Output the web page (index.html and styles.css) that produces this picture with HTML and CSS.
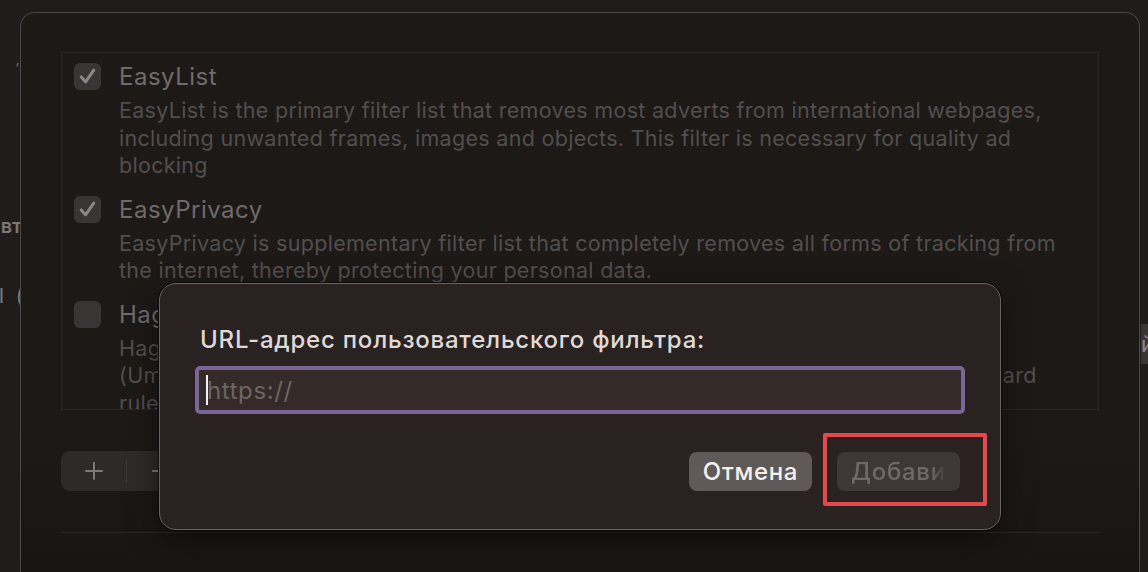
FILE: index.html
```html
<!DOCTYPE html>
<html lang="ru">
<head>
<meta charset="utf-8">
<title>Фильтры</title>
<link rel="stylesheet" href="styles.css">
</head>
<body>
<div class="page">
  <div class="behind-left">
    <span class="frag frag-tick">ʼ</span>
    <span class="frag frag-a">вт</span>
    <span class="frag frag-b">I (</span>
  </div>

  <div class="sheet">
    <div class="filter-list">
      <div class="item">
        <span class="checkbox checked">
          <svg viewBox="0 0 28 28" width="27" height="27"><path d="M7.5 14.5 L12 19.5 L20.5 7.5" fill="none" stroke="#8a8685" stroke-width="3.2" stroke-linecap="round" stroke-linejoin="round"/></svg>
        </span>
        <div class="item-text">
          <div class="item-title">EasyList</div>
          <div class="item-desc">EasyList is the primary filter list that removes most adverts from international webpages, including unwanted frames, images and objects. This filter is necessary for quality ad blocking</div>
        </div>
      </div>
      <div class="item">
        <span class="checkbox checked">
          <svg viewBox="0 0 28 28" width="27" height="27"><path d="M7.5 14.5 L12 19.5 L20.5 7.5" fill="none" stroke="#8a8685" stroke-width="3.2" stroke-linecap="round" stroke-linejoin="round"/></svg>
        </span>
        <div class="item-text">
          <div class="item-title">EasyPrivacy</div>
          <div class="item-desc">EasyPrivacy is supplementary filter list that completely removes all forms of tracking from the internet, thereby protecting your personal data.</div>
        </div>
      </div>
      <div class="item">
        <span class="checkbox"></span>
        <div class="item-text">
          <div class="item-title">Hagezi Multi NORMAL</div>
          <div class="item-desc">Hagezi's Multi NORMAL is an all-round protection list that cleans the internet<br>(Umbrella) blocks ads, affiliates, tracking, metrics, telemetry and phishing with standard<br>rules for everyday browsing.</div>
        </div>
      </div>
    </div>

    <div class="toolbar">
      <div class="segmented">
        <span class="seg">
          <svg viewBox="0 0 20 20" width="20" height="20"><path d="M10 2 V18 M2 10 H18" stroke="#7d7978" stroke-width="2" stroke-linecap="round"/></svg>
        </span>
        <span class="seg-sep"></span>
        <span class="seg">
          <svg viewBox="0 0 20 20" width="20" height="20"><path d="M3 10 H17" stroke="#7d7978" stroke-width="2" stroke-linecap="round"/></svg>
        </span>
      </div>
    </div>
    <div class="divider"></div>
  </div>

  <div class="behind-right">
    <span class="side-btn">й</span>
  </div>

  <div class="dialog">
    <div class="dialog-title">URL-адрес пользовательского фильтра:</div>
    <div class="field">
      <span class="caret"></span>
      <span class="placeholder">https://</span>
    </div>
    <div class="actions">
      <button class="btn btn-cancel">Отмена</button>
      <button class="btn btn-add"><span class="btn-add-label">Добавить</span></button>
      <span class="highlight"></span>
    </div>
  </div>
</div>
</body>
</html>
```

FILE: styles.css
```css
* { box-sizing: border-box; }

html, body {
  margin: 0;
  padding: 0;
  background: #211d1c;
  font-family: "Inter", "Noto Sans", "DejaVu Sans", sans-serif;
}

.page {
  position: relative;
  width: 1148px;
  height: 572px;
  overflow: hidden;
  display: flex;
  align-items: flex-start;
  background: #201c1b;
}

.behind-left {
  width: 20px;
  flex: none;
  display: flex;
  flex-direction: column;
  align-items: flex-end;
  overflow: hidden;
  color: #7c7877;
  font-size: 20px;
  font-weight: 600;
}

.frag { white-space: nowrap; line-height: 20px; }
.frag-tick { margin-top: 58px; font-size: 12px; color: #6a6665; margin-right: 1px; }
.frag-a { margin-top: 138px; margin-right: -2px; }
.frag-b { margin-top: 50px; font-weight: 400; letter-spacing: 3px; margin-right: -6px; }

.sheet {
  width: 1120px;
  height: 600px;
  flex: none;
  margin-top: 12px;
  border: 1px solid #4d4847;
  border-bottom: none;
  border-radius: 15px 15px 0 0;
  background: linear-gradient(180deg, #1d1917 0%, #1d1917 70%, #181413 100%);
  padding: 39px 40px 0 40px;
}

.filter-list {
  height: 358px;
  border: 1px solid #2a2624;
  overflow: hidden;
  padding: 9px 30px 0 12px;
  display: flex;
  flex-direction: column;
  gap: 15px;
}

.item {
  display: flex;
  align-items: flex-start;
  gap: 18px;
}

.checkbox {
  width: 27px;
  height: 27px;
  flex: none;
  border-radius: 6px;
  background: #393535;
  margin-top: 1px;
  display: flex;
}

.item-text { flex: 1; min-width: 0; }

.item-title {
  font-size: 24px;
  line-height: 30px;
  letter-spacing: 0.5px;
  color: #6f6b6a;
  white-space: nowrap;
}

.item-desc {
  margin-top: 5px;
  font-size: 21.5px;
  line-height: 27.5px;
  letter-spacing: 0.3px;
  color: #524e4d;
}

.toolbar {
  margin-top: 41px;
  display: flex;
}

.segmented {
  display: flex;
  align-items: center;
  height: 40px;
  border-radius: 9px;
  background: #2e2a29;
}

.seg {
  width: 65px;
  height: 40px;
  display: flex;
  align-items: center;
  justify-content: center;
}

.seg-sep {
  width: 1px;
  height: 24px;
  background: #3b3736;
}

.divider {
  margin-top: 41px;
  height: 1px;
  background: #2b2726;
}

.behind-right {
  flex: 1;
  padding-top: 324px;
  overflow: hidden;
}

.side-btn {
  display: block;
  margin-left: 1px;
  height: 40px;
  background: #3a3636;
  color: #8d8988;
  font-size: 22px;
  line-height: 40px;
  white-space: nowrap;
}

/* modal dialog overlaying the sheet */
.dialog {
  position: absolute;
  left: 159px;
  top: 283px;
  width: 842px;
  height: 247px;
  border: 1px solid #6a6361;
  border-radius: 17px;
  background: #2a2220;
  box-shadow: 0 0 0 1px #0c0a0a, 0 10px 30px rgba(0,0,0,0.5);
  padding: 40px 35px 0 35px;
}

.dialog-title {
  padding-left: 5px;
  font-size: 24px;
  font-weight: 500;
  line-height: 32px;
  letter-spacing: 0.78px;
  color: #dedad9;
  white-space: nowrap;
}

.field {
  margin-top: 10px;
  height: 48px;
  border: 4px solid #7b6496;
  border-radius: 5px;
  background: #342b29;
  display: flex;
  align-items: center;
  padding-left: 7px;
}

.caret {
  width: 2px;
  height: 30px;
  background: #f2f0f0;
  flex: none;
}

.placeholder {
  font-size: 24px;
  letter-spacing: 0.6px;
  color: #6d6563;
  margin-left: -1px;
}

.actions {
  position: relative;
  margin-top: 38px;
  display: flex;
  justify-content: flex-end;
  gap: 25px;
  padding-right: 5px;
}

.btn {
  width: 123px;
  height: 39px;
  border: none;
  border-radius: 8px;
  font-family: inherit;
  font-size: 24px;
  font-weight: 500;
  letter-spacing: 0.7px;
  padding: 0 14px;
  text-align: left;
  white-space: nowrap;
  overflow: hidden;
}

.btn-cancel {
  background: #5f5957;
  color: #f3f1f0;
  text-align: center;
  padding: 0;
}

.btn-add {
  background: #3e3735;
  color: #706967;
}

.btn-add-label {
  display: block;
  width: 96px;
  overflow: hidden;
  -webkit-mask-image: linear-gradient(90deg, #000 84%, transparent 100%);
  mask-image: linear-gradient(90deg, #000 84%, transparent 100%);
}

.highlight {
  position: absolute;
  right: -22px;
  top: -19px;
  width: 164px;
  height: 73px;
  border: 4px solid #e4474d;
  border-radius: 2px;
}
```
